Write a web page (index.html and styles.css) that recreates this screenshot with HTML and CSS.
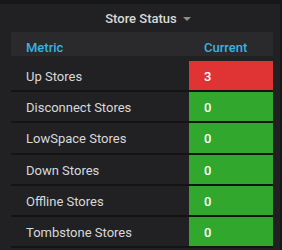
FILE: index.html
```html
<!DOCTYPE html>
<html lang="en">
<head>
  <meta charset="UTF-8">
  <title>Store Status</title>
  <link rel="stylesheet" href="styles.css">
</head>
<body>
  <div class="panel">
    <div class="panel-title">
      <span>Store Status</span>
      <span class="caret"></span>
    </div>

    <table class="status-table">
      <thead>
        <tr>
          <th>Metric</th>
          <th class="col-value">Current</th>
        </tr>
      </thead>
      <tbody>
        <tr>
          <td>Up Stores</td>
          <td class="col-value bad">3</td>
        </tr>
        <tr>
          <td>Disconnect Stores</td>
          <td class="col-value ok">0</td>
        </tr>
        <tr>
          <td>LowSpace Stores</td>
          <td class="col-value ok">0</td>
        </tr>
        <tr>
          <td>Down Stores</td>
          <td class="col-value ok">0</td>
        </tr>
        <tr>
          <td>Offline Stores</td>
          <td class="col-value ok">0</td>
        </tr>
        <tr>
          <td>Tombstone Stores</td>
          <td class="col-value ok">0</td>
        </tr>
      </tbody>
    </table>
  </div>
</body>
</html>
```

FILE: styles.css
```css
/* Global Styles */
* {
  margin: 0;
  padding: 0;
  box-sizing: border-box;
}

body {
  background-color: #161719;
  font-family: 'Roboto', 'Liberation Sans', sans-serif;
  color: #d8d9da;
  padding-top: 4px;
  overflow: hidden;
}

/* Panel */
.panel {
  width: 280px;
  height: 246px;
  background-color: #212123;
}

.panel-title {
  height: 28px;
  display: flex;
  justify-content: center;
  align-items: center;
  gap: 6px;
  font-size: 13px;
  font-weight: 500;
  color: #d8d9da;
  padding-left: 16px;
}

.caret {
  width: 0;
  height: 0;
  border-left: 4px solid transparent;
  border-right: 4px solid transparent;
  border-top: 4px solid #8e8e8e;
  margin-top: 1px;
}

/* Table */
.status-table {
  margin-left: 11px;
  width: 262px;
  border-collapse: separate;
  border-spacing: 0;
  font-size: 13px;
}

.status-table th {
  height: 29px;
  background-color: #2a2a2c;
  background-clip: padding-box;
  color: #33b5e5;
  font-weight: 500;
  text-align: left;
  padding-left: 15px;
  padding-top: 6px;
  border-bottom: 5px solid #212123;
}

.status-table td {
  height: 31.2px;
  padding-left: 15px;
  padding-top: 2px;
  border-bottom: 2px solid #141414;
}

.status-table .col-value {
  width: 84px;
}

.status-table td.col-value {
  color: #ffffff;
  font-weight: 500;
}

.bad {
  background-color: #e03434;
}

.ok {
  background-color: #31a82d;
}
```
